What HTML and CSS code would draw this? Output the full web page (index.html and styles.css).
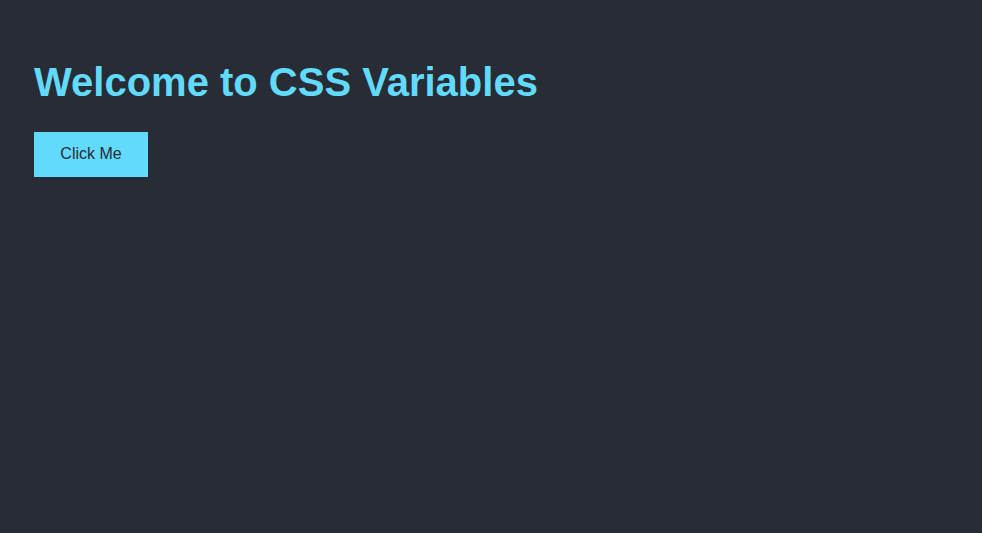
FILE: index.html
```html
<!DOCTYPE html>
<html>
<head>
<meta charset="utf-8">
<link rel="stylesheet" href="styles.css">
</head>
<body>
<div class="page">
  <h1 class="title">Welcome to CSS Variables</h1>
  <button class="btn">Click Me</button>
</div>
</body>
</html>
```
FILE: styles.css
```css
html, body {
  margin: 0;
  height: 100%;
  background: #282c34;
}
.page {
  padding: 59px 34px;
  font-family: "Liberation Sans", Arial, sans-serif;
}
.title {
  margin: 0 0 27px;
  font-size: 40px;
  line-height: 46px;
  font-weight: bold;
  color: #61dafb;
}
.btn {
  display: block;
  margin: 0;
  border: none;
  background: #61dafb;
  color: #282c34;
  font-family: "Liberation Sans", Arial, sans-serif;
  font-size: 16px;
  line-height: 19px;
  padding: 12px 24px 14px;
  width: 114px;
  height: 45px;
  cursor: pointer;
}
```
